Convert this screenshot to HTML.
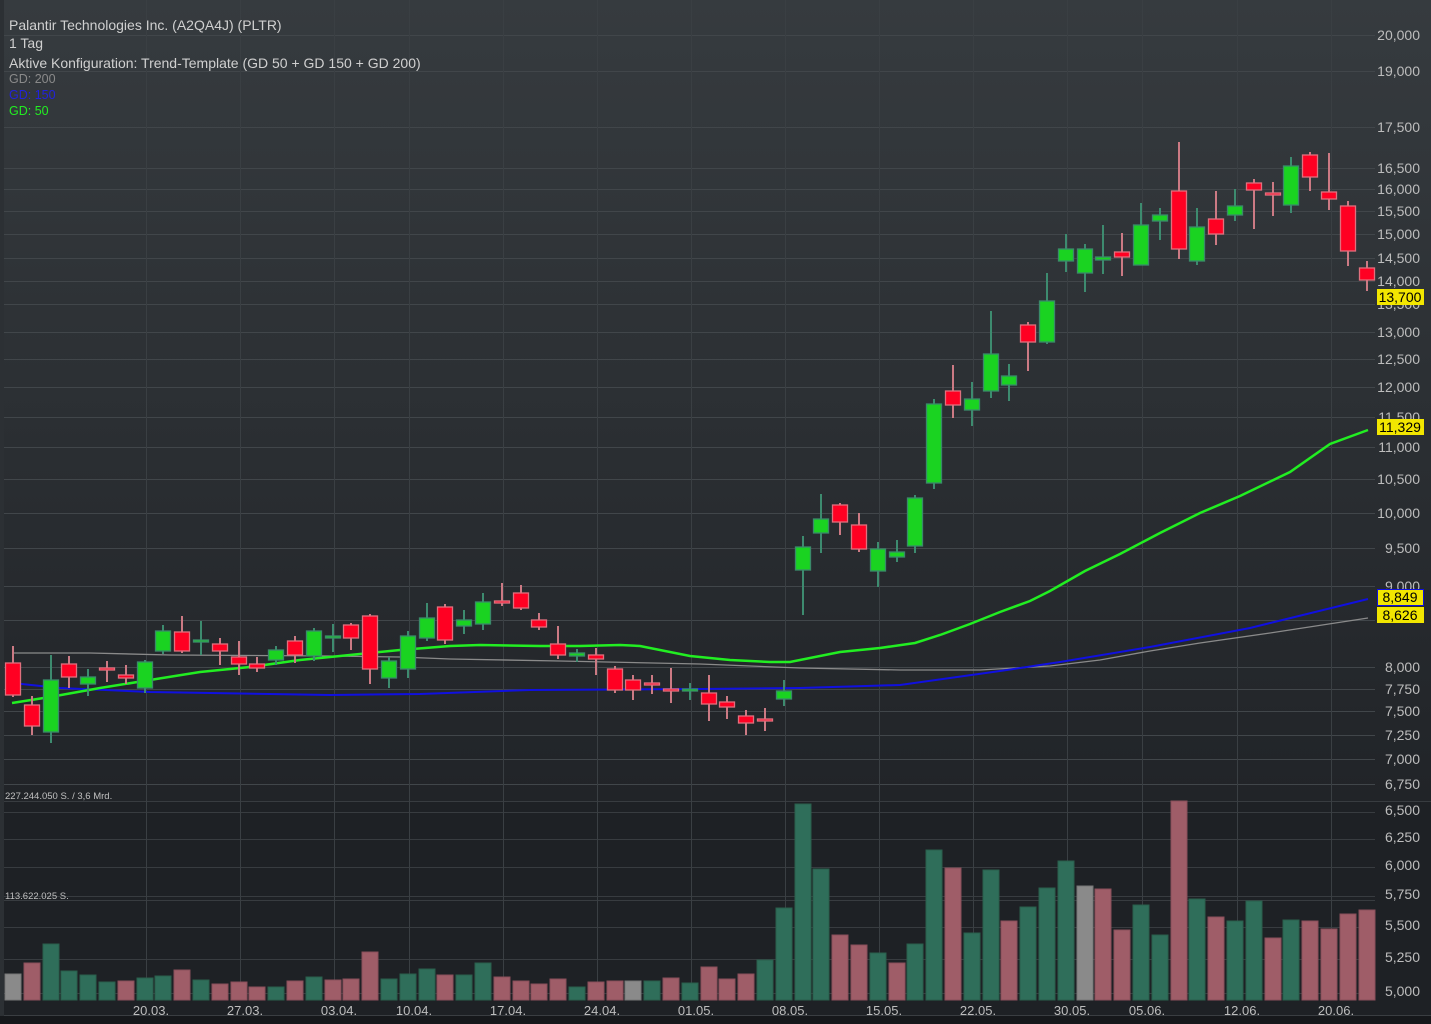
<!DOCTYPE html>
<html><head><meta charset="utf-8"><style>
html,body{margin:0;padding:0;width:1431px;height:1024px;overflow:hidden;background:#1c1f23;font-family:"Liberation Sans",sans-serif}
svg{position:absolute;left:0;top:0}
.t{position:absolute;left:9px;color:#d0d0d0;font-size:14px;white-space:nowrap}
</style></head><body>
<svg width="1431" height="1024" xmlns="http://www.w3.org/2000/svg" font-family="Liberation Sans, sans-serif">
<defs>
<linearGradient id="bg" x1="0" y1="0" x2="0" y2="1">
<stop offset="0" stop-color="#363b3f"/><stop offset="1" stop-color="#212428"/>
</linearGradient>
</defs>
<rect width="1431" height="1024" fill="#1e2125"/>
<rect x="0" y="0" width="1431" height="801" fill="url(#bg)"/>
<rect x="0" y="0" width="4" height="1016" fill="#2c3034"/>
<rect x="0" y="1016" width="1431" height="8" fill="#16181b"/>
<line x1="4" y1="1015.5" x2="1431" y2="1015.5" stroke="#3a3e42"/>
<!-- grid horizontal -->
<g stroke="#41464a" stroke-width="1">
<path d="M4 35.5H1375M4 71.5H1375M4 127.5H1375M4 168.5H1375M4 189.5H1375M4 211.5H1375M4 234.5H1375M4 258.5H1375M4 281.5H1375M4 304.5H1375M4 332.5H1375M4 359.5H1375M4 387.5H1375M4 417.5H1375M4 447.5H1375M4 479.5H1375M4 513.5H1375M4 548.5H1375M4 586.5H1375M4 620.5H1375M4 667.5H1375M4 689.5H1375M4 711.5H1375M4 735.5H1375M4 759.5H1375M4 784.5H1375"/>
<path d="M4 801.5H1431M4 812.5H1375M4 839.5H1375M4 867.5H1375M4 896.5H1375M4 900.5H1375M4 927.5H1375M4 959.5H1375M4 993.5H1375" stroke="#383c40"/>
<path d="M146.5 0V1000M240.5 0V1000M334.5 0V1000M409.5 0V1000M503.5 0V1000M597.5 0V1000M691.5 0V1000M785.5 0V1000M879.5 0V1000M973.5 0V1000M1067.5 0V1000M1142.5 0V1000M1237.5 0V1000M1331.5 0V1000" stroke="#3a3f43"/>
</g>
<!-- volume -->
<g fill="#2f6e5a" stroke="#2a5e4c">
<rect x="43" y="944" width="16" height="56"/><rect x="61" y="971" width="16" height="29"/><rect x="80" y="975" width="16" height="25"/><rect x="99" y="982" width="16" height="18"/><rect x="137" y="978" width="16" height="22"/><rect x="155" y="976" width="16" height="24"/><rect x="193" y="980" width="16" height="20"/><rect x="268" y="987" width="16" height="13"/><rect x="306" y="977" width="16" height="23"/><rect x="381" y="979" width="16" height="21"/><rect x="400" y="974" width="16" height="26"/><rect x="419" y="969" width="16" height="31"/><rect x="456" y="975" width="16" height="25"/><rect x="475" y="963" width="16" height="37"/><rect x="569" y="987" width="16" height="13"/><rect x="644" y="981" width="16" height="19"/><rect x="682" y="983" width="16" height="17"/><rect x="757" y="960" width="16" height="40"/><rect x="776" y="908" width="16" height="92"/><rect x="795" y="804" width="16" height="196"/><rect x="813" y="869" width="16" height="131"/><rect x="870" y="953" width="16" height="47"/><rect x="907" y="944" width="16" height="56"/><rect x="926" y="850" width="16" height="150"/><rect x="964" y="933" width="16" height="67"/><rect x="983" y="870" width="16" height="130"/><rect x="1020" y="907" width="16" height="93"/><rect x="1039" y="888" width="16" height="112"/><rect x="1058" y="861" width="16" height="139"/><rect x="1133" y="905" width="16" height="95"/><rect x="1152" y="935" width="16" height="65"/><rect x="1189" y="899" width="16" height="101"/><rect x="1227" y="921" width="16" height="79"/><rect x="1246" y="901" width="16" height="99"/><rect x="1283" y="920" width="16" height="80"/>
</g>
<g fill="#9f5d68" stroke="#8a4f5a">
<rect x="24" y="963" width="16" height="37"/><rect x="118" y="981" width="16" height="19"/><rect x="174" y="970" width="16" height="30"/><rect x="212" y="984" width="16" height="16"/><rect x="231" y="982" width="16" height="18"/><rect x="249" y="987" width="16" height="13"/><rect x="287" y="981" width="16" height="19"/><rect x="325" y="980" width="16" height="20"/><rect x="343" y="979" width="16" height="21"/><rect x="362" y="952" width="16" height="48"/><rect x="437" y="975" width="16" height="25"/><rect x="494" y="977" width="16" height="23"/><rect x="513" y="981" width="16" height="19"/><rect x="531" y="984" width="16" height="16"/><rect x="550" y="979" width="16" height="21"/><rect x="588" y="982" width="16" height="18"/><rect x="607" y="981" width="16" height="19"/><rect x="663" y="978" width="16" height="22"/><rect x="701" y="967" width="16" height="33"/><rect x="719" y="979" width="16" height="21"/><rect x="738" y="974" width="16" height="26"/><rect x="832" y="935" width="16" height="65"/><rect x="851" y="945" width="16" height="55"/><rect x="889" y="963" width="16" height="37"/><rect x="945" y="868" width="16" height="132"/><rect x="1001" y="921" width="16" height="79"/><rect x="1095" y="889" width="16" height="111"/><rect x="1114" y="930" width="16" height="70"/><rect x="1171" y="801" width="16" height="199"/><rect x="1208" y="917" width="16" height="83"/><rect x="1265" y="938" width="16" height="62"/><rect x="1302" y="921" width="16" height="79"/><rect x="1321" y="929" width="16" height="71"/><rect x="1340" y="914" width="16" height="86"/><rect x="1359" y="910" width="16" height="90"/>
</g>
<g fill="#8a8a8a" stroke="#777"><rect x="5" y="974" width="16" height="26"/><rect x="625" y="981" width="16" height="19"/><rect x="1077" y="886" width="16" height="114"/></g>
<!-- MAs -->
<polyline fill="none" stroke="#8a8a8a" stroke-width="1.3" points="12,653 90,653 170,655 330,656 400,657 450,659 560,661 700,664 800,668 900,670 980,670 1050,666 1100,660 1150,651 1200,643 1270,633 1368,618"/>
<polyline fill="none" stroke="#1010e0" stroke-width="2" points="12,683 60,688 150,692 330,695 420,694 530,690 700,689 800,688 900,685 950,678 1000,671 1060,662 1150,647 1250,628 1368,599"/>
<polyline fill="none" stroke="#22ee22" stroke-width="2.5" points="12,703 50,697 100,688 150,680 200,672 250,667 300,660 340,656 400,650 450,646 480,645 540,646 580,646 620,645 640,646 690,656 730,660 770,662 790,662 840,652 880,648 915,643 940,635 970,624 1000,612 1030,601 1050,591 1085,571 1120,554 1160,533 1200,513 1240,496 1290,472 1330,444 1368,430"/>
<!-- wicks green -->
<path stroke="#3d8b6f" stroke-width="2" fill="none" d="M51 655V743M88 669V696M145 660V693M163 625V654M201 621V655M276 646V665M314 628V661M333 624V652M389 657V688M408 631V678M427 603V641M464 610V634M483 593V630M577 649V662M690 683V700M784 680V706M803 536V615M821 494V553M878 542V587M897 540V562M915 495V553M934 399V489M972 382V426M991 311V398M1009 364V401M1047 273V344M1066 234V272M1085 244V292M1103 225V274M1141 203V265M1160 208V240M1197 208V265M1235 189V221M1291 157V213"/>
<path stroke="#cc7a84" stroke-width="2" fill="none" d="M13 646V697M32 696V735M69 656V688M107 661V682M126 665V684M182 616V653M220 638V665M239 641V675M257 657V672M295 636V663M351 623V650M370 614V684M445 604V644M502 583V606M521 585V610M539 613V630M558 626V659M596 648V675M615 666V693M633 675V700M652 675V694M671 668V703M709 675V721M727 696V719M746 710V735M765 708V731M840 503V535M859 513V552M953 365V418M1028 322V371M1122 233V276M1179 142V259M1216 191V245M1254 179V229M1273 182V216M1310 152V191M1329 153V210M1348 201V266M1367 261V291"/>
<!-- bodies green -->
<g fill="#1ad321" stroke="#3a8a6a" stroke-width="1.3">
<rect x="43.5" y="680" width="15" height="52"/><rect x="80.5" y="677" width="15" height="7"/><rect x="137.5" y="662" width="15" height="26"/><rect x="155.5" y="631" width="15" height="20"/><rect x="193.5" y="640" width="15" height="2"/><rect x="268.5" y="650" width="15" height="10"/><rect x="306.5" y="631" width="15" height="25"/><rect x="325.5" y="636" width="15" height="2"/><rect x="381.5" y="661" width="15" height="17"/><rect x="400.5" y="636" width="15" height="33"/><rect x="419.5" y="618" width="15" height="20"/><rect x="456.5" y="620" width="15" height="6"/><rect x="475.5" y="602" width="15" height="22"/><rect x="569.5" y="653" width="15" height="3"/><rect x="682.5" y="689" width="15" height="2"/><rect x="776.5" y="691" width="15" height="8"/><rect x="795.5" y="547" width="15" height="23"/><rect x="813.5" y="519" width="15" height="14"/><rect x="870.5" y="549" width="15" height="22"/><rect x="889.5" y="552" width="15" height="5"/><rect x="907.5" y="498" width="15" height="48"/><rect x="926.5" y="404" width="15" height="79"/><rect x="964.5" y="399" width="15" height="11"/><rect x="983.5" y="354" width="15" height="37"/><rect x="1001.5" y="376" width="15" height="9"/><rect x="1039.5" y="301" width="15" height="41"/><rect x="1058.5" y="249" width="15" height="12"/><rect x="1077.5" y="249" width="15" height="24"/><rect x="1095.5" y="257" width="15" height="3"/><rect x="1133.5" y="225" width="15" height="40"/><rect x="1152.5" y="215" width="15" height="6"/><rect x="1189.5" y="227" width="15" height="34"/><rect x="1227.5" y="206" width="15" height="9"/><rect x="1283.5" y="166" width="15" height="39"/>
</g>
<g fill="#ff0022" stroke="#e0707e" stroke-width="1.3">
<rect x="5.5" y="663" width="15" height="32"/><rect x="24.5" y="705" width="15" height="21"/><rect x="61.5" y="664" width="15" height="13"/><rect x="99.5" y="668" width="15" height="2"/><rect x="118.5" y="675" width="15" height="3"/><rect x="174.5" y="632" width="15" height="19"/><rect x="212.5" y="644" width="15" height="7"/><rect x="231.5" y="657" width="15" height="7"/><rect x="249.5" y="664" width="15" height="4"/><rect x="287.5" y="641" width="15" height="14"/><rect x="343.5" y="625" width="15" height="13"/><rect x="362.5" y="616" width="15" height="53"/><rect x="437.5" y="607" width="15" height="33"/><rect x="494.5" y="601" width="15" height="2"/><rect x="513.5" y="593" width="15" height="15"/><rect x="531.5" y="620" width="15" height="7"/><rect x="550.5" y="644" width="15" height="11"/><rect x="588.5" y="655" width="15" height="4"/><rect x="607.5" y="669" width="15" height="21"/><rect x="625.5" y="680" width="15" height="10"/><rect x="644.5" y="683" width="15" height="2"/><rect x="663.5" y="689" width="15" height="2"/><rect x="701.5" y="693" width="15" height="11"/><rect x="719.5" y="702" width="15" height="5"/><rect x="738.5" y="716" width="15" height="7"/><rect x="757.5" y="719" width="15" height="2"/><rect x="832.5" y="505" width="15" height="17"/><rect x="851.5" y="525" width="15" height="24"/><rect x="945.5" y="391" width="15" height="14"/><rect x="1020.5" y="325" width="15" height="17"/><rect x="1114.5" y="252" width="15" height="5"/><rect x="1171.5" y="191" width="15" height="58"/><rect x="1208.5" y="219" width="15" height="15"/><rect x="1246.5" y="183" width="15" height="7"/><rect x="1265.5" y="193" width="15" height="2"/><rect x="1302.5" y="155" width="15" height="22"/><rect x="1321.5" y="192" width="15" height="7"/><rect x="1340.5" y="206" width="15" height="45"/><rect x="1359.5" y="268" width="15" height="12"/>
</g>
<!-- axis labels -->
<g fill="#bdbdbd" font-size="14" text-anchor="end">
<text x="1420" y="40">20,000</text><text x="1420" y="76">19,000</text><text x="1420" y="132">17,500</text><text x="1420" y="173">16,500</text><text x="1420" y="194">16,000</text><text x="1420" y="216">15,500</text><text x="1420" y="239">15,000</text><text x="1420" y="263">14,500</text><text x="1420" y="286">14,000</text><text x="1420" y="309">13,500</text><text x="1420" y="337">13,000</text><text x="1420" y="364">12,500</text><text x="1420" y="392">12,000</text><text x="1420" y="422">11,500</text><text x="1420" y="452">11,000</text><text x="1420" y="484">10,500</text><text x="1420" y="518">10,000</text><text x="1420" y="553">9,500</text><text x="1420" y="591">9,000</text><text x="1420" y="672">8,000</text><text x="1420" y="694">7,750</text><text x="1420" y="716">7,500</text><text x="1420" y="740">7,250</text><text x="1420" y="764">7,000</text><text x="1420" y="789">6,750</text><text x="1420" y="815">6,500</text><text x="1420" y="842">6,250</text><text x="1420" y="870">6,000</text><text x="1420" y="899">5,750</text><text x="1420" y="930">5,500</text><text x="1420" y="962">5,250</text><text x="1420" y="996">5,000</text>
</g>
<g font-size="14" text-anchor="middle" fill="#000">
<rect x="1377" y="289" width="47" height="16" fill="#f2e600"/><text x="1400" y="302">13,700</text>
<rect x="1377" y="419" width="47" height="16" fill="#f2e600"/><text x="1400" y="432">11,329</text>
<rect x="1377.5" y="589.5" width="46" height="16" fill="#f2e600" stroke="#1010e0"/><text x="1400" y="602">8,849</text>
<rect x="1377" y="607" width="47" height="16" fill="#f2e600"/><text x="1400" y="620">8,626</text>
</g>
<g fill="#bdbdbd" font-size="13" text-anchor="middle">
<text x="151" y="1015">20.03.</text><text x="245" y="1015">27.03.</text><text x="339" y="1015">03.04.</text><text x="414" y="1015">10.04.</text><text x="508" y="1015">17.04.</text><text x="602" y="1015">24.04.</text><text x="696" y="1015">01.05.</text><text x="790" y="1015">08.05.</text><text x="884" y="1015">15.05.</text><text x="978" y="1015">22.05.</text><text x="1072" y="1015">30.05.</text><text x="1147" y="1015">05.06.</text><text x="1242" y="1015">12.06.</text><text x="1336" y="1015">20.06.</text>
</g>
<g fill="#c0c0c0" font-size="9.5">
<text x="5" y="799">227.244.050 S. / 3,6 Mrd.</text>
<text x="5" y="899">113.622.025 S.</text>
</g>
<g font-size="14" fill="#d0d0d0">
<text x="9" y="30">Palantir Technologies Inc. (A2QA4J) (PLTR)</text>
<text x="9" y="48">1 Tag</text>
<text x="9" y="68">Aktive Konfiguration: Trend-Template (GD 50 + GD 150 + GD 200)</text>
</g>
<g font-size="12.5">
<text x="9" y="83" fill="#8a8a8a">GD: 200</text>
<text x="9" y="99" fill="#2222dd">GD: 150</text>
<text x="9" y="115" fill="#22ee22">GD: 50</text>
</g>
</svg>
</body></html>
